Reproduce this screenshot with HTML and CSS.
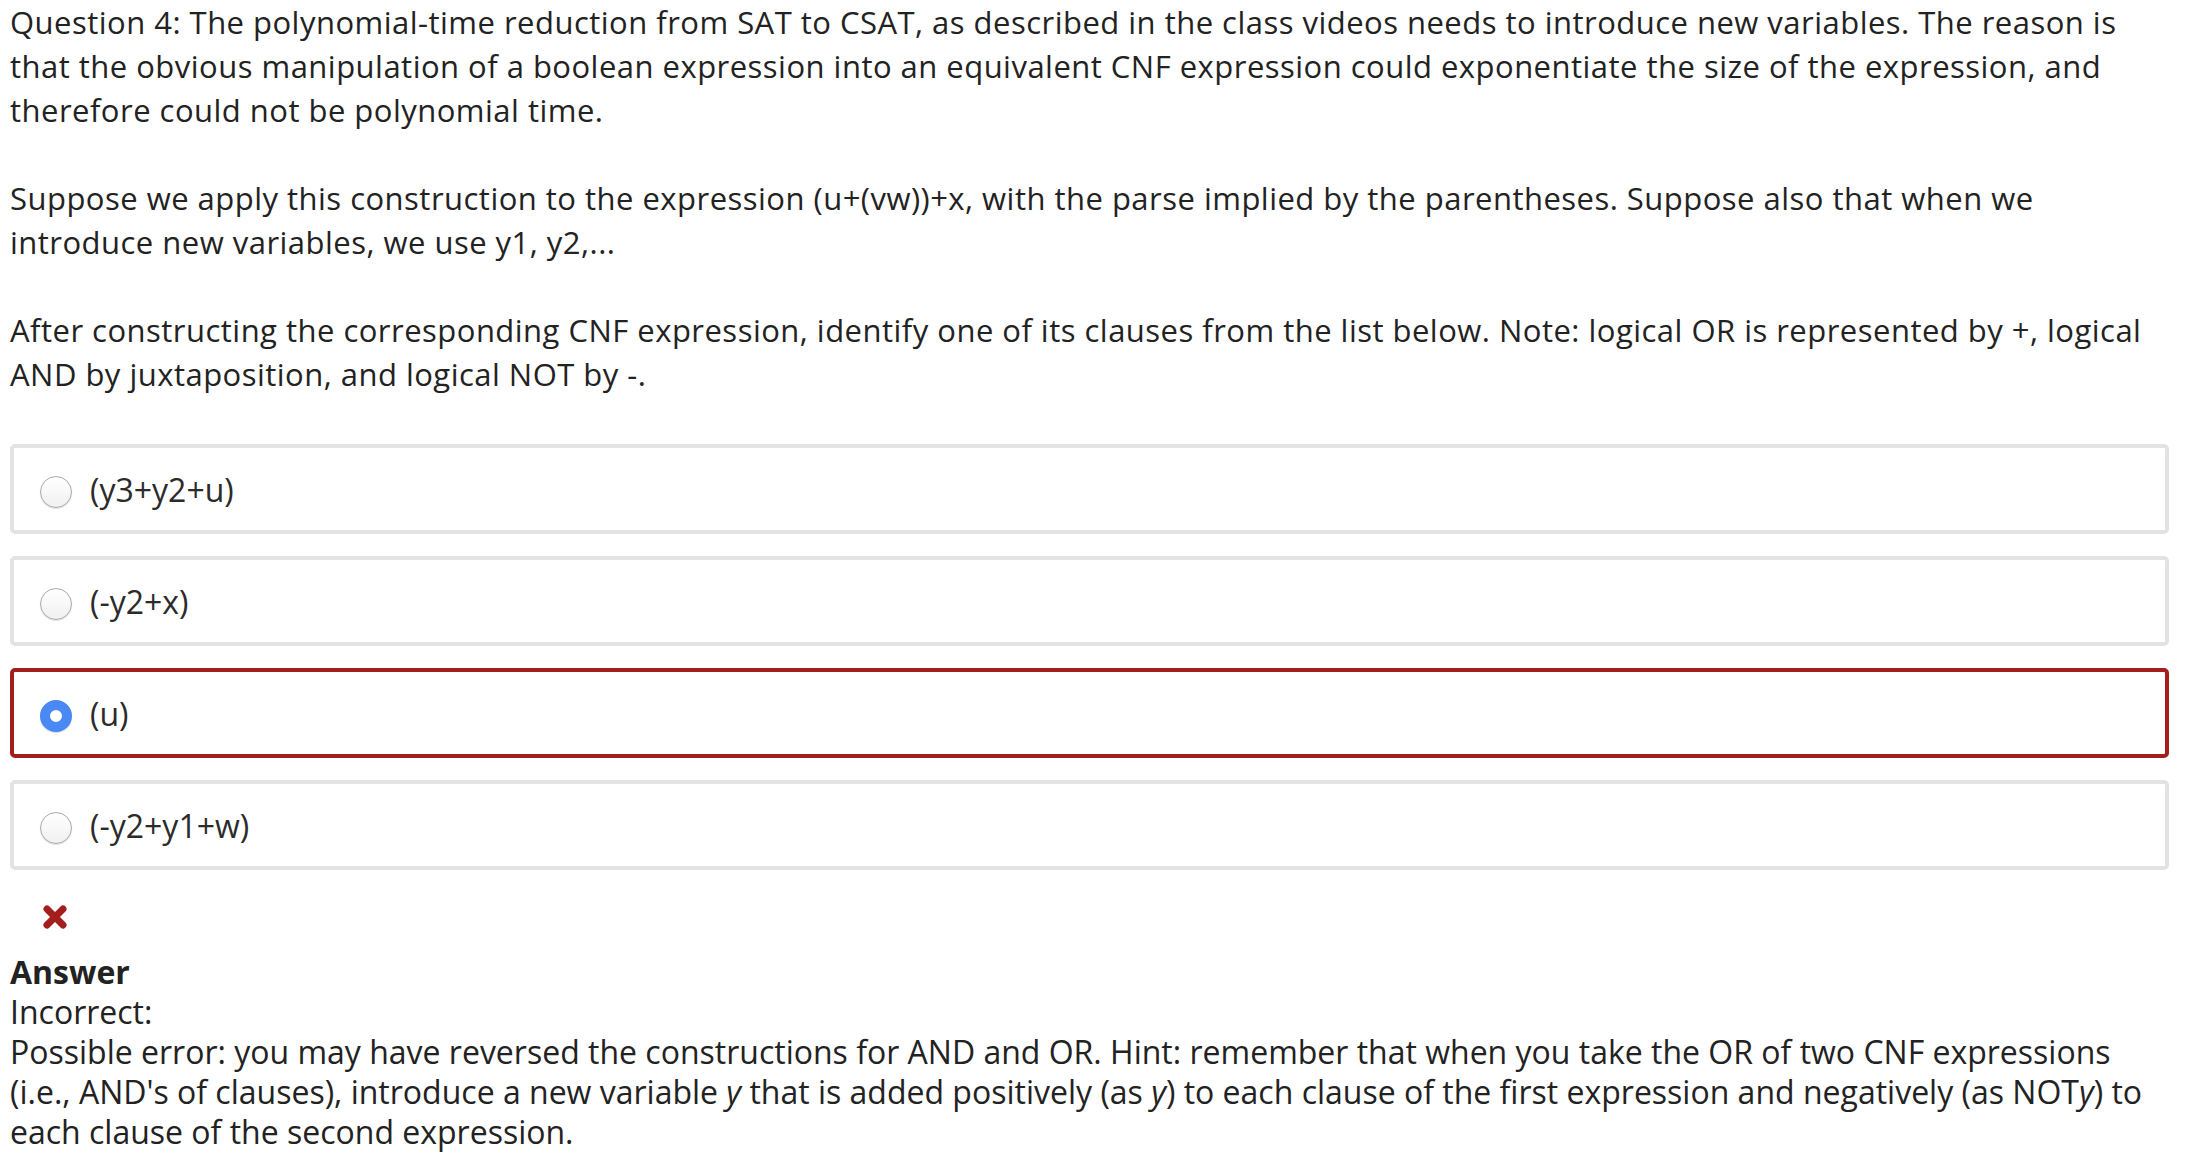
FILE: index.html
```html
<!DOCTYPE html>
<html>
<head>
<meta charset="utf-8">
<link rel="stylesheet" href="styles.css">
</head>
<body>
<div class="page">
  <div class="question">Question 4: The polynomial-time reduction from SAT to CSAT, as described in the class videos needs to introduce new variables. The reason is that the obvious manipulation of a boolean expression into an equivalent CNF expression could exponentiate the size of the expression, and therefore could not be polynomial time.<br><br>Suppose we apply this construction to the expression (u+(vw))+x, with the parse implied by the parentheses. Suppose also that when we introduce new variables, we use y1, y2,...<br><br>After constructing the corresponding CNF expression, identify one of its clauses from the list below. Note: logical OR is represented by +, logical AND by juxtaposition, and logical NOT by -.</div>
  <div class="options">
    <div class="option"><span class="radio"></span><span class="opt-text">(y3+y2+u)</span></div>
    <div class="option"><span class="radio"></span><span class="opt-text">(-y2+x)</span></div>
    <div class="option option-wrong"><span class="radio radio-checked"></span><span class="opt-text">(u)</span></div>
    <div class="option"><span class="radio"></span><span class="opt-text">(-y2+y1+w)</span></div>
  </div>
  <div class="mark">
    <svg width="26" height="26" viewBox="0 0 26 26"><path d="M5 5 L21 21 M21 5 L5 21" stroke="#a51e1e" stroke-width="7" stroke-linecap="round" fill="none"/></svg>
  </div>
  <div class="answer">
    <div class="answer-title">Answer</div>
    <div>Incorrect:</div>
    <div>Possible error: you may have reversed the constructions for AND and OR. Hint: remember that when you take the OR of two CNF expressions (i.e., AND's of clauses), introduce a new variable <em>y</em> that is added positively (as <em>y</em>) to each clause of the first expression and negatively (as NOT<em>y</em>) to each clause of the second expression.</div>
  </div>
</div>
</body>
</html>
```
FILE: styles.css
```css
html, body {
  margin: 0;
  padding: 0;
  background: #ffffff;
}
body {
  font-family: "Open Sans", "Noto Sans", sans-serif;
  color: #222222;
}
.page {
  width: 2159px;
  padding: 0 0 0 10px;
}
.question {
  width: 2150px;
  font-size: 31px;
  letter-spacing: 0.48px;
  line-height: 44px;
}
.options {
  margin-top: 48px;
  display: flex;
  flex-direction: column;
  gap: 22px;
}
.option {
  box-sizing: border-box;
  height: 90px;
  border: 4px solid #e3e3e3;
  border-radius: 5px;
  display: flex;
  align-items: center;
  padding: 6px 0 0 26px;
}
.option-wrong {
  border-color: #a51e1e;
}
.radio {
  box-sizing: border-box;
  width: 32px;
  height: 32px;
  border-radius: 50%;
  border: 1px solid #a9a9a9;
  background: linear-gradient(#ffffff, #f0f0f0);
  box-shadow: 0 1px 1px rgba(0,0,0,0.12);
  flex: none;
}
.radio-checked {
  border: 10px solid #4a89f3;
  background: #ffffff;
  box-shadow: 0 1px 1px rgba(0,0,0,0.15);
}
.opt-text {
  margin-left: 18px;
  font-size: 32px;
  color: #2b2b2b;
  margin-top: -6px;
}
.mark {
  margin: 34px 0 0 32px;
  height: 26px;
}
.mark svg {
  display: block;
}
.answer {
  margin-top: 22px;
  font-size: 32px;
  line-height: 40px;
}
.answer-title {
  font-weight: 700;
}
```
